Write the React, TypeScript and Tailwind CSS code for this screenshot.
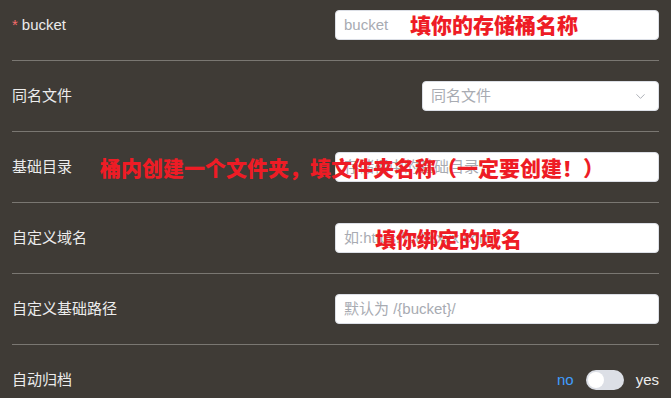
import { ChevronDown } from "lucide-react";

const cjk = "font-['Liberation_Sans','Noto_Sans_CJK_SC',sans-serif]";

function Note({ text, className }: { text: string; className: string }) {
  return (
    <span
      className={`pointer-events-none absolute whitespace-nowrap font-['Noto_Sans_CJK_SC',sans-serif] text-[21px] font-black leading-none text-[#ee1c25] ${className}`}
    >
      {text}
    </span>
  );
}

function TextInput({ placeholder }: { placeholder: string }) {
  return (
    <div className="flex h-[30px] w-[324px] items-center rounded-[4px] border border-[#dcdfe6] bg-white px-[8px] text-[15px] text-[#a8abb2]">
      {placeholder}
    </div>
  );
}

function Row({ label, required, children, first }: { label: string; required?: boolean; children: React.ReactNode; first?: boolean }) {
  return (
    <div
      className={`relative flex items-center justify-between border-b border-[#7a7772] ${first ? "pt-[10px]" : "pt-[20px]"} pb-[20px]`}
    >
      <span className="text-[15px] text-[#ececec]">
        {required && <span className="mr-[4px] text-[#f56c6c]">*</span>}
        {label}
      </span>
      {children}
    </div>
  );
}

export default function App() {
  return (
    <div className={`h-[398px] w-[671px] overflow-hidden bg-[#3f3b36] ${cjk}`}>
      <div className="w-[659px] pl-[12px]">
        <Row label="bucket" required first>
          <TextInput placeholder="bucket" />
          <Note text="填你的存储桶名称" className="left-[398px] top-[14px]" />
        </Row>
        <Row label="同名文件">
          <div className="flex h-[30px] w-[237px] items-center justify-between rounded-[4px] border border-[#dcdfe6] bg-white pl-[8px] pr-[10px] text-[15px] text-[#a8abb2]">
            <span>同名文件</span>
            <ChevronDown className="h-[15px] w-[15px] text-[#a8abb2]" strokeWidth={1.5} />
          </div>
        </Row>
        <Row label="基础目录">
          <TextInput placeholder="存储桶中的基础目录" />
          <Note text="桶内创建一个文件夹，填文件夹名称（一定要创建！）" className="left-[88px] top-[25px]" />
        </Row>
        <Row label="自定义域名">
          <TextInput placeholder="如:https://cdn.xxx.com" />
          <Note text="填你绑定的域名" className="left-[363px] top-[25px]" />
        </Row>
        <Row label="自定义基础路径">
          <TextInput placeholder="默认为 /{bucket}/" />
        </Row>
        <div className="flex items-center justify-between pt-[20px] pb-[20px]">
          <span className="text-[15px] text-[#ececec]">自动归档</span>
          <div className="flex h-[30px] items-center gap-[12px] text-[15px]">
            <span className="text-[#409eff]">no</span>
            <span className="relative inline-flex h-[20px] w-[38px] items-center rounded-full bg-[#dcdfe6]">
              <span className="absolute left-[2px] h-[16px] w-[16px] rounded-full bg-white" />
            </span>
            <span className="text-[#ececec]">yes</span>
          </div>
        </div>
      </div>
    </div>
  );
}
